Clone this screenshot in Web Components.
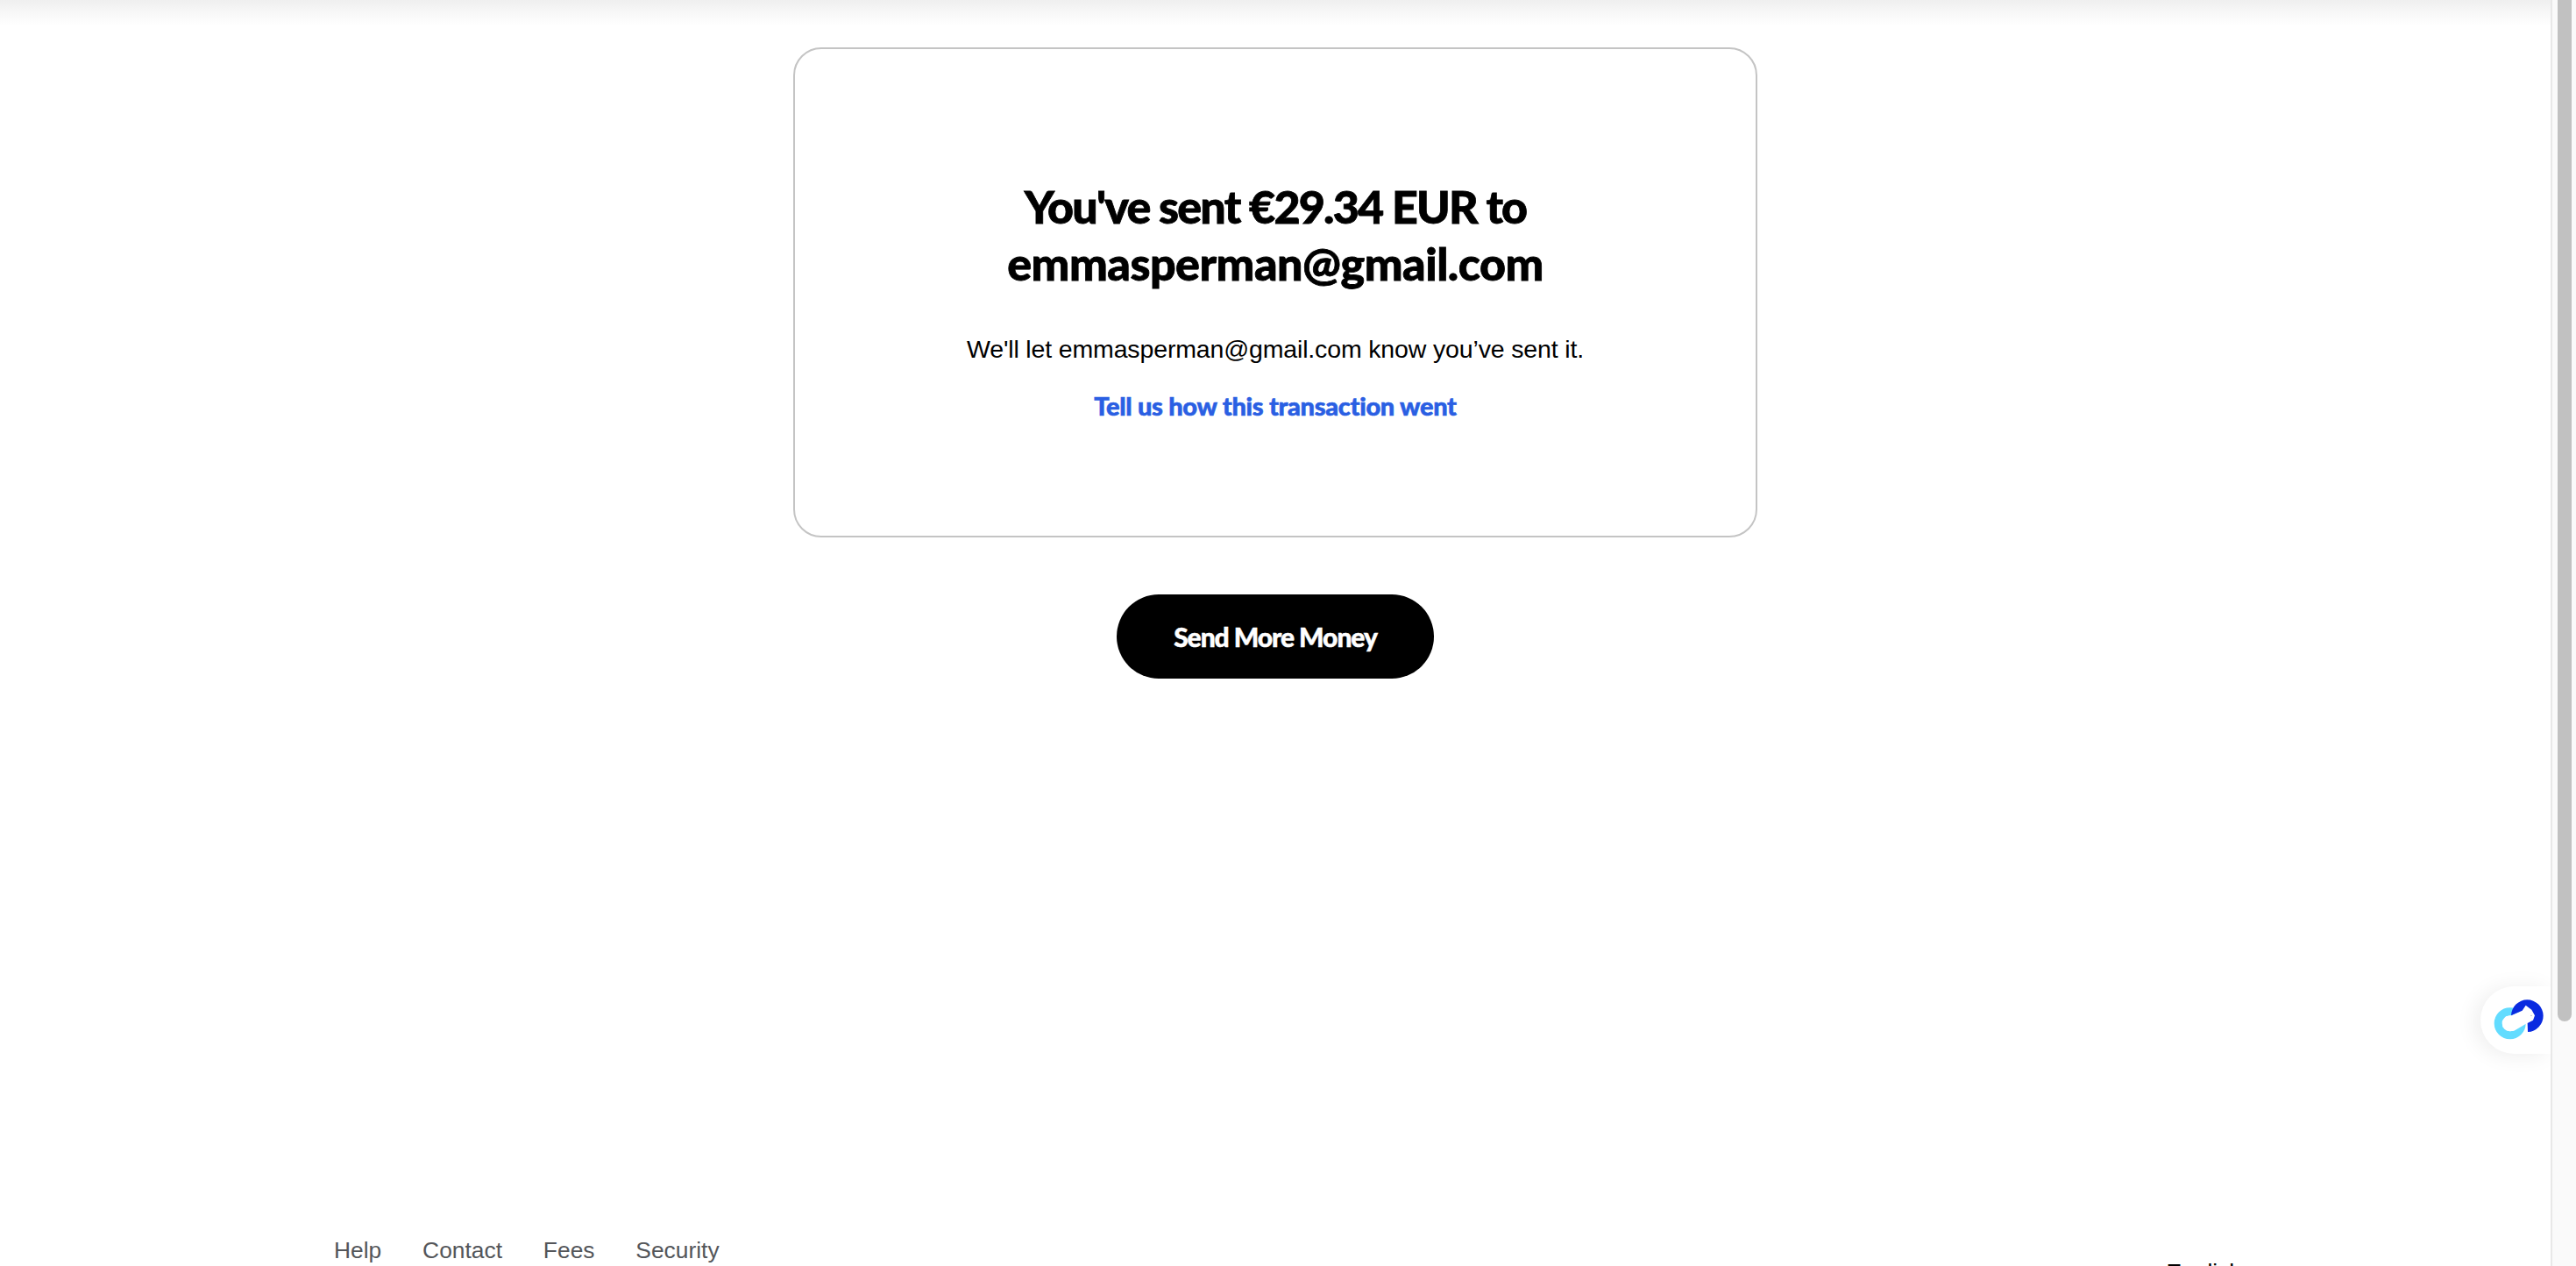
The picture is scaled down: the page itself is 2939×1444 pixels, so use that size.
<!DOCTYPE html>
<html lang="en"><head><meta charset="utf-8"><title>Sent</title>
<style>
html,body{margin:0;padding:0;height:100%;overflow:hidden;background:#fff}
</style></head><body>
<app-shell>
  <result-card>
    <span slot="title"><span style="letter-spacing:-1.8px">You've sent €29.34 EUR to</span><br>emmasperman@gmail.com</span>
    <span slot="note">We'll let emmasperman@gmail.com know you’ve sent it.</span>
    <span slot="link">Tell us how this transaction went</span>
  </result-card>
  <pill-button>Send More Money</pill-button>
  <site-footer slot="footer"></site-footer>
</app-shell>
<script>
function def(name, html){
  customElements.define(name, class extends HTMLElement{
    constructor(){super();this.attachShadow({mode:'open'}).innerHTML=html;}
  });
}
def('app-shell',`<style>
:host{display:flex;width:2939px;height:1444px;overflow:hidden;position:relative;background:#fff}
.page{flex:1;min-width:0;display:flex;flex-direction:column;align-items:center;height:1444px;overflow:hidden}
.topshade{align-self:stretch;flex:none;height:30px;background:linear-gradient(#efefef,#f7f7f7 45%,#fff)}
.grow{flex:1}
.foot{align-self:stretch;flex:none;height:38px}
.bar{flex:none;width:29px;background:#fafafa;border-left:2px solid #e8e8e8;box-sizing:border-box;padding-left:6px}
.thumb{width:16px;height:1165px;background:#c1c1c1;border-radius:0 0 8px 8px}
.chat{position:absolute;left:2830px;top:1125px;box-sizing:border-box;width:80px;height:77px;padding:5px 0 0 5px;background:#fff;border-radius:39px 0 0 39px;box-shadow:-6px 2px 24px rgba(0,0,0,.07);clip-path:inset(-40px 0 -40px -40px)}
svg{display:block;width:75px;height:70px}
</style>
<div class="page">
  <div class="topshade"></div>
  <slot></slot>
  <div class="grow"></div>
  <div class="foot"><slot name="footer"></slot></div>
</div>
<div class="bar"><div class="thumb"></div></div>
<div class="chat">
<svg viewBox="0 0 225 210">
  <circle cx="86" cy="112" r="40.5" fill="none" stroke="#62dcff" stroke-width="27"/>
  <path d="M90 85 128 68 140 50 165 70 172 90 146 110 118 127 100 137 86 139 62 125 59 105 72 88Z" fill="#fff"/>
  <path d="M90 85A55 55 0 1 1 147 141L146 111 165 101 171 85 160 65 140 50 128 68 105 78Z" fill="#0a2be0"/>
  <circle cx="159" cy="85" r="2" fill="#9aa"/>
</svg></div>`);
def('result-card',`<style>
:host{display:flex;flex-direction:column;align-items:center;box-sizing:border-box;width:1100px;height:559px;margin-top:24px;border:2px solid #c4c4c4;border-radius:32px;padding-top:147px;color:#000;text-align:center;flex:none}
h1{margin:0;font:900 52px/65px "Lato Black",Lato,sans-serif;letter-spacing:-.5px;-webkit-text-stroke:.8px #000}
p{margin:46px 0 0;font:400 28.5px/38px "Liberation Sans",sans-serif;letter-spacing:-.15px}
a{display:block;margin-top:27px;font:900 29px/38px "Lato Black",Lato,sans-serif;color:#2a5fe3;letter-spacing:-.3px;-webkit-text-stroke:.6px #2a5fe3}
</style><h1><slot name="title"></slot></h1><p><slot name="note"></slot></p><a><slot name="link"></slot></a>`);
def('pill-button',`<style>
:host{display:flex;align-items:center;justify-content:center;flex:none;width:362px;height:96px;margin-top:65px;border-radius:48px;background:#000;color:#fff;font:900 30px/1 "Lato Black",Lato,sans-serif;letter-spacing:-1.05px;-webkit-text-stroke:.5px #fff}
</style><slot></slot>`);
def('site-footer',`<style>
:host{display:flex;justify-content:space-between;height:40px;padding:0 0 0 381px;font:400 26.4px/40px "Liberation Sans",sans-serif;color:#54565a}
nav{display:flex;gap:46.8px}
.lang{color:#000;margin-right:352px;padding-top:25px;white-space:nowrap}
</style><nav><span>Help</span><span>Contact</span><span>Fees</span><span>Security</span></nav><div class="lang">English</div>`);
</script>
</body></html>
